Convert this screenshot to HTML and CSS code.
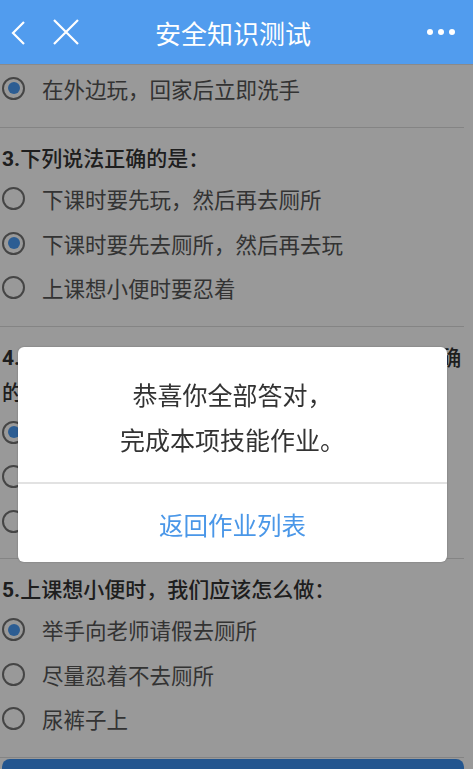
FILE: index.html
```html
<!DOCTYPE html>
<html lang="zh-CN">
<head>
  <meta charset="UTF-8">
  <meta name="viewport" content="width=device-width, initial-scale=1.0">
  <title>安全知识测试</title>
  <link rel="stylesheet" href="styles.css">
</head>
<body>
  <!-- 顶部导航 -->
  <header class="nav">
    <div class="nav-left">
      <svg class="nav-icon icon-back" viewBox="0 0 16 24" width="16" height="24">
        <path d="M14 1 L3 12 L14 23" fill="none" stroke="#fff" stroke-width="2.2"/>
      </svg>
      <svg class="nav-icon icon-close" viewBox="0 0 26 26" width="26" height="26">
        <path d="M1 1 L25 25 M25 1 L1 25" fill="none" stroke="#fff" stroke-width="2.2"/>
      </svg>
    </div>
    <h1 class="nav-title">安全知识测试</h1>
    <div class="nav-more"><span></span><span></span><span></span></div>
  </header>

  <!-- 题目列表 -->
  <main class="quiz">
    <section class="question question-partial">
      <label class="option checked"><span class="radio"></span>在外边玩，回家后立即洗手</label>
    </section>

    <section class="question">
      <p class="q-title"><b>3.</b>下列说法正确的是：</p>
      <label class="option"><span class="radio"></span>下课时要先玩，然后再去厕所</label>
      <label class="option checked"><span class="radio"></span>下课时要先去厕所，然后再去玩</label>
      <label class="option"><span class="radio"></span>上课想小便时要忍着</label>
    </section>

    <section class="question question-long">
      <p class="q-title"><b>4.</b>课间看到同学在走廊上追逐打闹，下列做法正确的是：</p>
      <label class="option checked"><span class="radio"></span>提醒同学不要在走廊上追逐打闹</label>
      <label class="option"><span class="radio"></span>和同学一起追逐打闹</label>
      <label class="option"><span class="radio"></span>在一旁看热闹</label>
    </section>

    <section class="question">
      <p class="q-title"><b>5.</b>上课想小便时，我们应该怎么做：</p>
      <label class="option checked"><span class="radio"></span>举手向老师请假去厕所</label>
      <label class="option"><span class="radio"></span>尽量忍着不去厕所</label>
      <label class="option"><span class="radio"></span>尿裤子上</label>
    </section>

    <div class="submit-bar">
      <button class="btn-submit">提交</button>
    </div>
  </main>

  <!-- 结果弹窗 -->
  <div class="mask"></div>
  <div class="dialog">
    <div class="dialog-body">
      <p>恭喜你全部答对，</p>
      <p>完成本项技能作业。</p>
    </div>
    <div class="dialog-footer">
      <a class="dialog-btn" href="#">返回作业列表</a>
    </div>
  </div>
</body>
</html>
```

FILE: styles.css
```css
/* 基础 */
:root {
  --nav-blue: #519cee;
  --btn-blue: #398eee;
  --text: #555;
  --title: #333;
}

* {
  margin: 0;
  padding: 0;
  box-sizing: border-box;
}

body {
  font-family: "Roboto", "Noto Sans CJK SC", sans-serif;
  background: #fff;
  color: var(--text);
  overflow: hidden;
}

/* 导航栏 */
.nav {
  height: 65px;
  background: var(--nav-blue);
  border-bottom: 1px solid #8a8a8a;
  display: flex;
  align-items: center;
  position: relative;
  z-index: 30;
}

.nav-left {
  width: 100px;
  display: flex;
  align-items: center;
  padding-left: 10px;
}

.icon-back {
  margin-top: 1px;
}

.icon-close {
  margin-left: 27px;
}

.nav-title {
  flex: 1;
  text-align: center;
  color: #fff;
  font-size: 26px;
  font-weight: normal;
  margin-right: 7px;
  font-family: "Noto Sans CJK SC", sans-serif;
}

.nav-more {
  width: 100px;
  display: flex;
  justify-content: flex-end;
  gap: 5px;
  padding-right: 18px;
}

.nav-more span {
  width: 6px;
  height: 6px;
  border-radius: 50%;
  background: #fff;
}

/* 题目 */
.quiz {
  padding-right: 9px;
}

.question {
  border-bottom: 1px solid #dcdcdc;
  padding: 14px 0 16px;
}

.question-partial {
  padding-top: 1px;
}

.question-long {
  padding-bottom: 14px;
}

.question-long .q-title {
  margin-bottom: -1px;
}

.q-title {
  font-size: 21px;
  line-height: 35px;
  color: var(--title);
  padding-left: 2px;
  font-weight: 500;
}

.q-title b {
  font-family: "Roboto", sans-serif;
}

.option {
  display: flex;
  align-items: center;
  height: 44.5px;
  font-size: 21.5px;
  padding-left: 2px;
  font-family: "Noto Sans CJK SC", sans-serif;
}

.radio {
  width: 23px;
  height: 23px;
  border: 2.5px solid #747474;
  border-radius: 50%;
  margin-right: 17px;
  display: flex;
  align-items: center;
  justify-content: center;
  flex-shrink: 0;
}

.option.checked .radio::after {
  content: "";
  width: 12px;
  height: 12px;
  border-radius: 50%;
  background: #4a9cf6;
}

.submit-bar {
  padding: 1px 9px 20px 2px;
  margin-right: -9px;
}

.btn-submit {
  width: 100%;
  height: 48px;
  border: none;
  border-radius: 8px;
  background: var(--btn-blue);
  color: #fff;
  font-size: 20px;
}

/* 遮罩与弹窗 */
.mask {
  position: fixed;
  top: 65px;
  left: 0;
  right: 0;
  bottom: 0;
  background: rgba(0, 0, 0, 0.4);
  z-index: 10;
}

.dialog {
  position: fixed;
  top: 347px;
  left: 18px;
  width: 429px;
  height: 215px;
  background: #fff;
  border-radius: 6px;
  box-shadow: 0 0 2px rgba(0, 0, 0, 0.25);
  z-index: 20;
  display: flex;
  flex-direction: column;
  font-family: "Noto Sans CJK SC", sans-serif;
}

.dialog-body {
  padding: 25px 0 20px;
  text-align: center;
  font-size: 25px;
  line-height: 45px;
  color: #333;
  border-bottom: 2px solid #e2e2e2;
}

.dialog-footer {
  flex: 1;
  display: flex;
  align-items: center;
  justify-content: center;
}

.dialog-btn {
  color: #4a97e8;
  font-size: 24.5px;
  text-decoration: none;
  margin-top: 2px;
}
```
